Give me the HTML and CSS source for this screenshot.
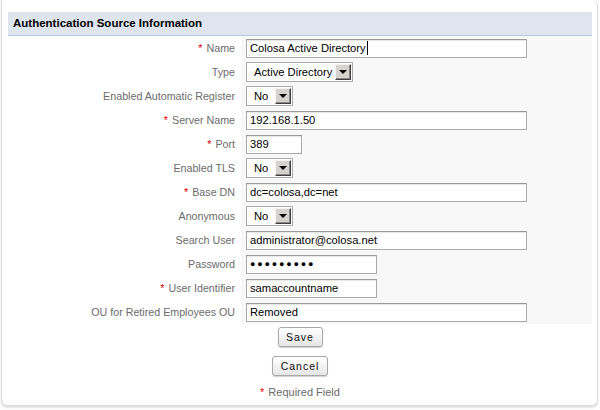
FILE: index.html
```html
<!DOCTYPE html>
<html>
<head>
<meta charset="utf-8">
<link rel="stylesheet" href="styles.css">
</head>
<body>
<div class="panel">
  <div class="header">Authentication Source Information</div>
  <div class="form">
    <div class="label"><span class="req">*</span>Name</div>
    <div class="cell"><div class="field w-long">Colosa Active Directory<span class="caret"></span></div></div>

    <div class="label">Type</div>
    <div class="cell"><div class="select w-type"><span class="sel-text">Active Directory</span><span class="arrow"></span></div></div>

    <div class="label">Enabled Automatic Register</div>
    <div class="cell"><div class="select w-no"><span class="sel-text">No</span><span class="arrow"></span></div></div>

    <div class="label"><span class="req">*</span>Server Name</div>
    <div class="cell"><div class="field w-long">192.168.1.50</div></div>

    <div class="label"><span class="req">*</span>Port</div>
    <div class="cell"><div class="field w-port">389</div></div>

    <div class="label">Enabled TLS</div>
    <div class="cell"><div class="select w-no"><span class="sel-text">No</span><span class="arrow"></span></div></div>

    <div class="label"><span class="req">*</span>Base DN</div>
    <div class="cell"><div class="field w-long">dc=colosa,dc=net</div></div>

    <div class="label">Anonymous</div>
    <div class="cell"><div class="select w-no"><span class="sel-text">No</span><span class="arrow"></span></div></div>

    <div class="label">Search User</div>
    <div class="cell"><div class="field w-long">administrator@colosa.net</div></div>

    <div class="label">Password</div>
    <div class="cell"><div class="field w-mid pw">●●●●●●●●●</div></div>

    <div class="label"><span class="req">*</span>User Identifier</div>
    <div class="cell"><div class="field w-mid">samaccountname</div></div>

    <div class="label">OU for Retired Employees OU</div>
    <div class="cell"><div class="field w-long">Removed</div></div>
  </div>
  <div class="actions">
    <button class="btn btn-save">Save</button>
    <button class="btn btn-cancel">Cancel</button>
    <div class="note"><span class="req">*</span>Required Field</div>
  </div>
</div>
</body>
</html>
```
FILE: styles.css
```css
html, body {
  margin: 0;
  padding: 0;
  background: #ffffff;
}
body {
  font-family: "Liberation Sans", Arial, sans-serif;
  width: 600px;
  height: 410px;
  overflow: hidden;
}
.panel {
  box-sizing: border-box;
  margin: 0 2px 0 1px;
  height: 406px;
  border: 1px solid #d9d9d9;
  border-top: 0;
  border-radius: 0 6px 6px 6px;
  box-shadow: 0 2px 2px #e2e2e2;
  padding: 12px 5px 0 6px;
  display: flex;
  flex-direction: column;
}
.header {
  height: 23px;
  line-height: 23px;
  background: #dfe5ee;
  border-bottom: 1px solid #b7c8da;
  font-weight: bold;
  font-size: 11.5px;
  color: #000;
  padding-left: 5px;
}
.form {
  display: grid;
  grid-template-columns: 233px 1fr;
  grid-auto-rows: 24px;
}
.label {
  background: #fff;
  color: #6b6b6b;
  font-size: 10.7px;
  text-align: right;
  padding-right: 6px;
  display: flex;
  align-items: center;
  justify-content: flex-end;
  white-space: nowrap;
}
.req {
  color: #e00000;
  margin-right: 4px;
}
.cell {
  background: #f8f8f8;
  padding-left: 5px;
  display: flex;
  align-items: center;
}
.field {
  box-sizing: border-box;
  height: 19px;
  background: #fff;
  border: 1px solid #a9a9a9;
  border-top-color: #9a9a9a;
  box-shadow: inset 0 1px 0 #e8e8e8;
  font-size: 11.2px;
  color: #000;
  line-height: 17px;
  padding-left: 3px;
  white-space: nowrap;
  overflow: hidden;
}
.caret {
  display: inline-block;
  width: 1px;
  height: 14px;
  background: #000;
  vertical-align: -3px;
  margin-left: 1px;
}
.w-long { width: 281px; }
.w-mid { width: 131px; }
.w-port { width: 56px; }
.pw {
  font-size: 9px;
  letter-spacing: 1.8px;
  line-height: 17px;
}
.select {
  box-sizing: border-box;
  height: 20px;
  background: #fff;
  border: 1px solid #a9a9a9;
  display: flex;
  align-items: center;
  justify-content: space-between;
  font-size: 11.2px;
  color: #000;
  padding: 0 1px 0 7px;
  white-space: nowrap;
}
.w-type { width: 107px; }
.w-no { width: 47px; }
.arrow {
  flex-shrink: 0;
  box-sizing: border-box;
  width: 16px;
  height: 16px;
  background: #d6d3ce;
  border-top: 1px solid #f4f4f4;
  border-left: 1px solid #f4f4f4;
  border-right: 1px solid #404040;
  border-bottom: 1px solid #404040;
  box-shadow: inset -1px -1px 0 #888;
  position: relative;
}
.arrow::after {
  content: "";
  position: absolute;
  left: 3px;
  top: 5px;
  border-left: 4px solid transparent;
  border-right: 4px solid transparent;
  border-top: 4px solid #000;
}
.actions {
  display: flex;
  flex-direction: column;
  align-items: center;
  padding-top: 3px;
}
.btn {
  font-family: "Liberation Sans", Arial, sans-serif;
  font-size: 10.5px;
  letter-spacing: 1px;
  color: #111;
  height: 20px;
  padding: 0;
  border: 1px solid #a8a8a8;
  border-radius: 3px;
  background: linear-gradient(#ffffff, #e6e6e6);
  box-shadow: 0 1px 1px #d0d0d0;
}
.btn-save { width: 45px; }
.btn-cancel { width: 56px; margin-top: 9px; }
.note {
  margin-top: 10px;
  font-size: 11px;
  color: #6b6b6b;
}
```
